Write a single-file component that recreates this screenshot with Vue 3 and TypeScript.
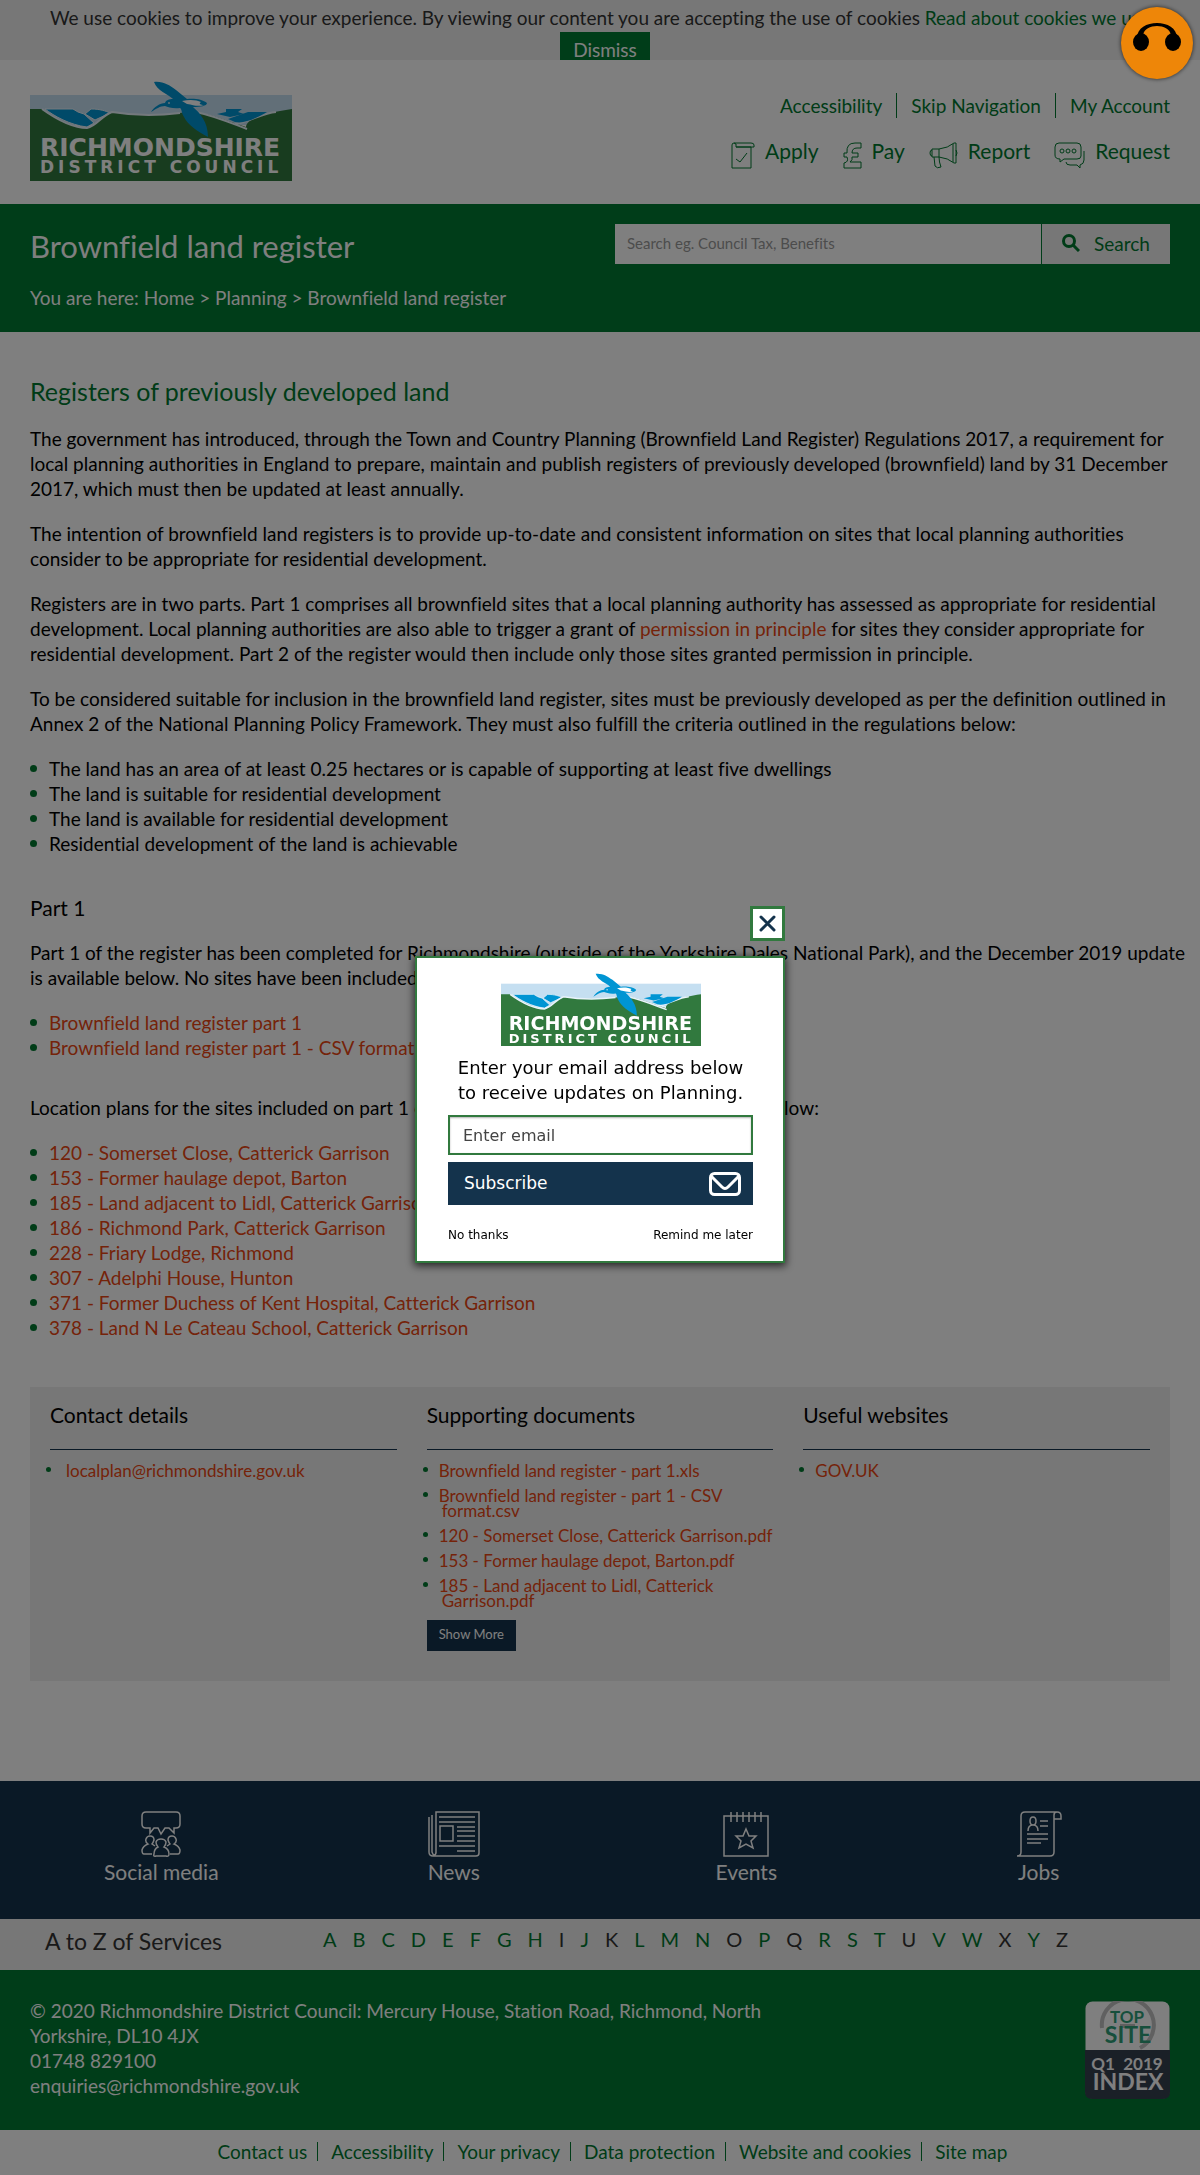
<script setup lang="ts">
import { ref } from 'vue'

interface Letter {
  name: string
  active: boolean
}

const cookiesUrl = '#cookies'
const email = ref('')
const query = ref('')

const criteria: string[] = [
  'The land has an area of at least 0.25 hectares or is capable of supporting at least five dwellings',
  'The land is suitable for residential development',
  'The land is available for residential development',
  'Residential development of the land is achievable',
]

const registers: string[] = ['Brownfield land register part 1', 'Brownfield land register part 1 - CSV format']

const plans: string[] = [
  '120 - Somerset Close, Catterick Garrison',
  '153 - Former haulage depot, Barton',
  '185 - Land adjacent to Lidl, Catterick Garrison',
  '186 - Richmond Park, Catterick Garrison',
  '228 - Friary Lodge, Richmond',
  '307 - Adelphi House, Hunton',
  '371 - Former Duchess of Kent Hospital, Catterick Garrison',
  '378 - Land N Le Cateau School, Catterick Garrison',
]

const documents: string[] = [
  'Brownfield land register - part 1.xls',
  'Brownfield land register - part 1 - CSV format.csv',
  '120 - Somerset Close, Catterick Garrison.pdf',
  '153 - Former haulage depot, Barton.pdf',
  '185 - Land adjacent to Lidl, Catterick Garrison.pdf',
]

const letters: Letter[] = 'ABCDEFGHIJKLMNOPQRSTUVWXYZ'
  .split('')
  .map((name) => ({ name, active: !'IKOQUXZ'.includes(name) }))

const footerLinks: string[] = [
  'Contact us',
  'Accessibility',
  'Your privacy',
  'Data protection',
  'Website and cookies',
  'Site map',
]
</script>

<template>
  <svg class="defs" aria-hidden="true">
    <symbol id="council-logo" viewBox="0 0 262 100" preserveAspectRatio="xMidYMin slice">
      <rect y="14" width="262" height="30" fill="#c5dff1" />
      <path d="M0 28H12C28 38 42 46 57 47C67 45 71 35 82 31C100 34 125 35 150 32C172 28 190 38 216 46C216 38 234 32 262 28V100H0Z" fill="#31793e" />
      <path d="M15 28H43L48 31L54 33L64 42L57 46C40 44 24 35 15 28Z" fill="#0095d3" stroke="#e8f3fa" stroke-width="1" />
      <path d="M55 33L61 28C70 28 76 30 80 32L65 39Z" fill="#0095d3" stroke="#e8f3fa" stroke-width="1" />
      <path d="M12 28C26 38 42 47 57 47C67 45 71 35 82 31C100 34 125 35 150 32M166 31C185 35 201 42 217 48M205 43C220 41 232 32 246 31" fill="none" stroke="#e8f3fa" stroke-width="2" />
      <path d="M187 33L196 31V28H212L208 31L214 33L200 36Z" fill="#0095d3" />
      <path d="M198 38L218 31H237C225 38 214 43 205 41Z" fill="#0095d3" />
      <path d="M124 1C133 0 139 4 146 9L157 18C163 17 173 18 177 22C177 25 170 26 163 26C170 32 178 41 178 56C167 50 158 44 154 36C151 31 152 28 150 27C143 28 138 26 135 25C130 25 126 28 121 31C124 26 130 22 135 22C136 19 139 18 143 18C138 13 127 10 124 1Z" fill="#0095d3" />
      <path d="M152 20C160 18 167 19 171 21C168 23 171 24 174 24C167 26 164 24 157 23Z" fill="#fff" />
      <circle cx="139" cy="22" r="1" fill="#c5dff1" />
      <text x="10" y="75" class="logo-name">RICHMONDSHIRE</text>
      <text x="10" y="92" class="logo-type">DISTRICT COUNCIL</text>
    </symbol>
  </svg>

  <div class="cookie-bar">
    <p>
      We use cookies to improve your experience. By viewing our content you are accepting the use of cookies
      <a :href="cookiesUrl">Read about cookies we use</a>
    </p>
    <button type="button" class="dismiss">Dismiss</button>
  </div>

  <header class="header">
    <a href="#home" class="logo" aria-label="Richmondshire District Council">
      <svg><use href="#council-logo" /></svg>
    </a>
    <div class="header-nav">
      <nav class="top-links">
        <a href="#accessibility">Accessibility</a>
        <a href="#content">Skip Navigation</a>
        <a href="#account">My Account</a>
      </nav>
      <nav class="tasks">
        <a href="#apply">
          <svg width="24" height="27" viewBox="0 0 24 27">
            <path d="M1 26V3Q1 1 3 1H20Q23 1 23 3V5H5Q6 1 3 1M5 5H20V26H1M5 17L9 20L16 11" />
          </svg>
          Apply
        </a>
        <a href="#pay">
          <svg width="19" height="27" viewBox="0 0 19 27">
            <path d="M18 1V6H14Q9 6 9 11H15V15H9Q10 18 7 20H18V26H1V21Q6 20 4 15H1V11H4Q3 1 12 1Z" />
          </svg>
          Pay
        </a>
        <a href="#report">
          <svg width="29" height="27" viewBox="0 0 29 27">
            <path d="M3 7H10Q19 6 25 1H27V21H25Q19 16 10 15H3ZM3 8Q1 8 1 11Q1 14 3 14M10 7V15M24 2V20M27 8Q29 11 27 14M5 15L6 24Q8 27 12 25Q10 20 10 15" />
          </svg>
          Report
        </a>
        <a href="#request">
          <svg width="31" height="27" viewBox="0 0 31 27">
            <path d="M5 1H23Q27 1 27 5V14Q27 17 23 17H10L6 20V17Q1 17 1 13V5Q1 1 5 1ZM30 9V18Q30 22 26 23V26L23 23H16Q12 23 12 20" />
            <circle cx="8" cy="9" r="2" />
            <circle cx="14" cy="9" r="2" />
            <circle cx="20" cy="9" r="2" />
          </svg>
          Request
        </a>
      </nav>
    </div>
  </header>

  <section class="banner">
    <div class="banner-text">
      <h1>Brownfield land register</h1>
      <p class="crumbs">
        You are here: <a href="#home">Home</a> &gt; <a href="#planning">Planning</a> &gt; Brownfield land register
      </p>
    </div>
    <form class="search" @submit.prevent>
      <input v-model="query" type="search" aria-label="Search" placeholder="Search eg. Council Tax, Benefits" />
      <button type="submit">
        <svg width="18" height="18" viewBox="0 0 18 18">
          <circle cx="7" cy="7" r="5.5" />
          <path d="M11 11L17 17" />
        </svg>
        Search
      </button>
    </form>
  </section>

  <main id="content" class="content">
    <h2>Registers of previously developed land</h2>
    <p>
      The government has introduced, through the Town and Country Planning (Brownfield Land Register) Regulations 2017,
      a requirement for local planning authorities in England to prepare, maintain and publish registers of previously
      developed (brownfield) land by 31 December 2017, which must then be updated at least annually.
    </p>
    <p>
      The intention of brownfield land registers is to provide up-to-date and consistent information on sites that local
      planning authorities consider to be appropriate for residential development.
    </p>
    <p>
      Registers are in two parts. Part 1 comprises all brownfield sites that a local planning authority has assessed as
      appropriate for residential development. Local planning authorities are also able to trigger a grant of
      <a href="#permission">permission in principle</a> for sites they consider appropriate for residential
      development. Part 2 of the register would then include only those sites granted permission in principle.
    </p>
    <p>
      To be considered suitable for inclusion in the brownfield land register, sites must be previously developed as per
      the definition outlined in Annex 2 of the National Planning Policy Framework. They must also fulfill the criteria
      outlined in the regulations below:
    </p>
    <ul>
      <li v-for="item in criteria" :key="item">{{ item }}</li>
    </ul>
    <h3>Part 1</h3>
    <p>
      Part 1 of the register has been completed for Richmondshire (outside of the Yorkshire Dales National Park), and
      the December 2019 update is available below. No sites have been included
    </p>
    <ul>
      <li v-for="item in registers" :key="item"><a href="#register">{{ item }}</a></li>
    </ul>
    <p class="plans-intro">
      Location plans for the sites included on part 1 of the register are available to open in full below:
    </p>
    <ul>
      <li v-for="item in plans" :key="item"><a href="#plan">{{ item }}</a></li>
    </ul>

    <section class="panel">
      <div>
        <h3>Contact details</h3>
        <ul class="contact">
          <li><a href="mailto:localplan@richmondshire.gov.uk">localplan@richmondshire.gov.uk</a></li>
        </ul>
      </div>
      <div>
        <h3>Supporting documents</h3>
        <ul>
          <li v-for="item in documents" :key="item"><a href="#document">{{ item }}</a></li>
        </ul>
        <button type="button" class="more">Show More</button>
      </div>
      <div>
        <h3>Useful websites</h3>
        <ul>
          <li><a href="#govuk">GOV.UK</a></li>
        </ul>
      </div>
    </section>
  </main>

  <nav class="channels">
    <a href="#social">
      <svg width="46" height="46" viewBox="0 0 46 46">
        <path d="M8 1H38Q42 1 42 5V13Q42 17 38 17H36V22L31 17H27L23 23L20 17H16L12 22V17H8Q4 17 4 13V5Q4 1 8 1Z" />
        <path d="M14 43H6Q4 43 4 39Q5 35 10 33Q7 31 8 28Q9 25 12 25Q16 25 16 29Q15 32 14 33L17 35M32 43H40Q42 43 42 39Q41 35 36 33Q39 31 38 28Q37 25 34 25Q30 25 30 29Q31 32 32 33L29 35M20 36Q18 34 18 31Q19 28 23 28Q27 28 28 31Q28 34 26 36Q31 38 31 43Q31 46 28 45H18Q15 46 16 43Q16 38 20 36Z" />
      </svg>
      Social media
    </a>
    <a href="#news">
      <svg width="52" height="46" viewBox="0 0 52 46">
        <path d="M8 42V1H51V42Q51 45 48 45H5Q1 45 1 41V6M4 4V41Q5 44 6 44Q8 44 8 41M11 6H47M11 11H47M29 16H47M29 20H47M29 25H47M29 30H47M11 35H47M29 40H47M12 15H25V30H12Z" />
      </svg>
      News
    </a>
    <a href="#events">
      <svg width="46" height="46" viewBox="0 0 46 46">
        <path d="M1 5H45V45H1ZM8 1V11M14 1V11M20 1V11M26 1V11M32 1V11M38 1V11M23 18L26 25H33L28 30L30 37L23 33L16 37L18 30L13 25H20Z" />
      </svg>
      Events
    </a>
    <a href="#jobs">
      <svg width="46" height="46" viewBox="0 0 46 46">
        <path d="M1 45Q5 45 5 41V5Q5 1 9 1H41Q45 1 45 5V8H38V41Q38 45 34 45H1M38 8V4Q38 1 41 1M24 10H32M24 15H32M11 23H32M11 28H32M11 32H25" />
        <path d="M17 6Q20 6 20 10Q20 14 17 14Q14 14 14 10Q14 6 17 6ZM12 20Q12 14 17 14Q22 14 22 20" />
      </svg>
      Jobs
    </a>
  </nav>

  <section class="az">
    <h2>A to Z of Services</h2>
    <ul>
      <li v-for="letter in letters" :key="letter.name">
        <a v-if="letter.active" :href="'#' + letter.name">{{ letter.name }}</a>
        <span v-else>{{ letter.name }}</span>
      </li>
    </ul>
  </section>

  <footer>
    <div class="address">
      <p>
        © 2020 Richmondshire District Council: Mercury House, Station Road, Richmond, North Yorkshire, DL10 4JX<br />
        01748 829100<br />
        enquiries@richmondshire.gov.uk
      </p>
      <svg class="badge" width="85" height="98" viewBox="0 0 85 98" role="img" aria-label="Top site, Q1 2019 index">
        <rect x="0.5" y="0.5" width="84" height="97" rx="7" fill="#fff" />
        <path d="M0 49H85V91Q85 98 78 98H7Q0 98 0 91Z" fill="#35404f" />
        <path d="M17 27A26 26 0 1 1 55 47M35 25H50" fill="none" stroke="#c0c0c0" stroke-width="4" />
        <text x="42" y="22" class="badge-top">TOP</text>
        <text x="43" y="42" class="badge-site">SITE</text>
        <text x="42" y="69" class="badge-date">Q1&nbsp; 2019</text>
        <text x="43" y="89" class="badge-index">INDEX</text>
      </svg>
    </div>
    <nav class="footer-links">
      <a v-for="link in footerLinks" :key="link" href="#footer">{{ link }}</a>
    </nav>
  </footer>

  <div class="overlay">
    <div class="dialog" role="dialog" aria-label="Subscribe to updates">
      <button type="button" class="close" aria-label="Close">
        <svg width="17" height="17" viewBox="0 0 17 17"><path d="M2 2L15 15M15 2L2 15" /></svg>
      </button>
      <form class="popup" @submit.prevent>
        <svg class="popup-logo"><use href="#council-logo" /></svg>
        <label for="email">Enter your email address below<br />to receive updates on Planning.</label>
        <input id="email" v-model="email" type="email" placeholder="Enter email" />
        <button type="submit" class="subscribe">
          Subscribe
          <svg width="32" height="24" viewBox="0 0 32 24">
            <rect x="1.5" y="1.5" width="29" height="21" rx="4" />
            <path d="M2 4L13 15Q16 18 19 15L30 4" />
          </svg>
        </button>
        <div class="popup-actions">
          <button type="button">No thanks</button>
          <button type="button">Remind me later</button>
        </div>
      </form>
    </div>
  </div>

  <button type="button" class="listen" aria-label="Listen to this page">
    <svg width="48" height="30" viewBox="0 0 48 30">
      <path d="M4 16C4 -4 44 -4 44 16L38 13C36 1 12 1 10 13Z" />
      <ellipse cx="8" cy="20" rx="8" ry="9" />
      <ellipse cx="40" cy="20" rx="8" ry="9" />
    </svg>
  </button>
</template>

<style>
body {
  margin: 0;
  background: #fff;
}

#app {
  font: 19px/25px Lato, "Open Sans", sans-serif;
  font-variant-ligatures: none;
  color: #000;
}
</style>

<style scoped>
* {
  box-sizing: border-box;
}

h1,
h2,
h3,
p,
ul {
  margin: 0;
  padding: 0;
  font-weight: inherit;
}

ul {
  list-style: none;
}

a {
  color: #00782f;
  text-decoration: none;
}

button,
input {
  font: inherit;
  border: 0;
  border-radius: 0;
  margin: 0;
}

.defs {
  position: absolute;
  width: 0;
  height: 0;
}

.logo-name,
.logo-type {
  fill: #fff;
  font-family: "DejaVu Sans", sans-serif;
  font-weight: 700;
}

.logo-name {
  font-size: 25px;
}

.logo-type {
  font-size: 17px;
  letter-spacing: 4px;
}

.cookie-bar {
  height: 60px;
  overflow: hidden;
  padding: 5px 30px 0;
  background: #eee;
  color: #333;
  text-align: center;
}

.dismiss {
  margin: 2px 0 0 10px;
  padding: 5px 13px 10px;
  height: 40px;
  background: #007a32;
  color: #fff;
}

.header {
  display: flex;
  justify-content: space-between;
  align-items: flex-start;
  height: 144px;
  padding: 21px 30px 0;
}

.logo svg {
  display: block;
  width: 262px;
  height: 100px;
}

.header-nav {
  display: flex;
  flex-direction: column;
  align-items: flex-end;
  padding-top: 12px;
}

.top-links {
  display: flex;
}

.top-links a + a {
  margin-left: 14px;
  padding-left: 14px;
  border-left: 1px solid #00782f;
}

.tasks {
  display: flex;
  gap: 24px;
  margin-top: 20px;
  font-size: 21px;
}

.tasks a {
  display: flex;
  gap: 10px;
}

.tasks svg {
  margin-top: 4px;
  fill: none;
  stroke: #00782f;
}

.banner {
  display: flex;
  justify-content: space-between;
  height: 128px;
  padding: 20px 30px 0;
  background: #007a32;
  color: #fff;
}

.banner a {
  color: #fff;
}

h1 {
  font-size: 31px;
  line-height: 45px;
}

.crumbs {
  margin-top: 16px;
}

.search {
  display: flex;
  width: 555px;
  height: 40px;
}

.search input {
  flex: 1;
  min-width: 0;
  padding: 0 12px 2px;
  background: #fff;
  font-size: 15px;
}

.search input::placeholder {
  color: #999;
}

.search button {
  display: flex;
  align-items: center;
  justify-content: center;
  gap: 14px;
  width: 128px;
  margin-left: 1px;
  padding: 0 6px 2px;
  background: #eee;
  color: #00782f;
}

.search button svg {
  fill: none;
  stroke: #00782f;
  stroke-width: 3;
}

.content {
  padding: 42px 30px 100px;
}

.content > h2 {
  margin-bottom: 17px;
  font-size: 25px;
  line-height: 35px;
  color: #00782f;
}

.content > p,
.content > ul {
  margin-bottom: 20px;
}

/* Running text may reach a little into the page gutter. */
.content > p {
  margin-right: -20px;
}

.content > h3 {
  margin: 39px 0 20px;
  font-size: 21px;
}

.content > .plans-intro {
  margin-top: 35px;
}

.content a {
  color: #ea4612;
}

li::before {
  content: "";
  display: inline-block;
  border-radius: 50%;
  background: #00782f;
}

.content > ul li {
  display: flex;
  align-items: center;
  gap: 12px;
}

.content > ul li::before {
  width: 7px;
  height: 7px;
}

.panel {
  display: grid;
  grid-template-columns: repeat(3, 1fr);
  gap: 30px;
  margin-top: 47px;
  padding: 15px 20px 0;
  background: #eee;
}

.panel h3 {
  margin-bottom: 13px;
  padding-bottom: 22px;
  border-bottom: 1px solid #14334c;
  font-size: 21px;
}

.panel li {
  position: relative;
  margin-bottom: 10px;
  padding-left: 15px;
  font-size: 17px;
  line-height: 15px;
  text-indent: -3px;
}

.panel li::before {
  position: absolute;
  top: 4px;
  left: -4px;
  width: 5px;
  height: 5px;
}

.panel .contact li {
  padding-left: 19px;
}

.more {
  display: block;
  height: 31px;
  margin: 12px 0 30px;
  padding: 0 12px 3px;
  background: #14334c;
  color: #fff;
  font-size: 13px;
}

.channels {
  display: flex;
  height: 138px;
  padding: 30px 15px 0;
  background: #14334c;
  font-size: 21px;
}

.channels a {
  flex: 1;
  display: flex;
  flex-direction: column;
  align-items: center;
  gap: 2px;
  color: #fff;
}

.channels svg {
  fill: none;
  stroke: #fff;
  stroke-width: 1.5;
}

.az {
  display: flex;
  height: 51px;
  padding: 8px 45px 0;
  background: #eee;
  color: #333;
}

.az h2 {
  width: 278px;
  padding-top: 2px;
  font-size: 23px;
}

.az ul {
  display: flex;
  gap: 16px;
  font-size: 20px;
}

.az li::before {
  display: none;
}

.address {
  display: flex;
  justify-content: space-between;
  height: 160px;
  padding: 28px 30px 0;
  background: #007a32;
  color: #fff;
}

.address p {
  width: 740px;
}

.badge {
  margin-top: 3px;
}

.badge text {
  font-weight: 700;
  text-anchor: middle;
}

.badge-top {
  fill: #2f9f78;
  font-size: 17px;
}

.badge-site {
  fill: #2f9f78;
  font-size: 23px;
}

.badge-date {
  fill: #fff;
  font-size: 17px;
}

.badge-index {
  fill: #fff;
  font-size: 23px;
}

.footer-links {
  display: flex;
  justify-content: center;
  height: 45px;
  padding: 12px 0 14px 22px;
}

.footer-links a {
  padding: 0 10px 0 13px;
  line-height: 19px;
}

.footer-links a + a {
  border-left: 1px solid #00782f;
}

.overlay {
  position: fixed;
  inset: 0;
  display: flex;
  align-items: center;
  justify-content: center;
  padding-bottom: 6px;
  background: rgba(0, 0, 0, 0.5);
  font-family: "DejaVu Sans", sans-serif;
  font-size: 18px;
}

.dialog {
  display: flex;
  flex-direction: column;
  align-items: flex-end;
  gap: 15px;
  width: 370px;
}

.close {
  display: flex;
  align-items: center;
  justify-content: center;
  width: 35px;
  height: 35px;
  padding: 0;
  border: 3px solid #31793e;
  background: #fff;
}

.close svg {
  fill: none;
  stroke: #14334c;
  stroke-width: 3;
  stroke-linecap: round;
}

.popup {
  display: flex;
  flex-direction: column;
  align-items: center;
  width: 100%;
  height: 307px;
  padding: 15px 30px 0 31px;
  border: 2px solid #31793e;
  background: #fff;
  box-shadow: 0 2px 8px 1px rgba(0, 0, 0, 0.7);
}

.popup-logo {
  width: 200px;
  height: 73px;
}

.popup label {
  margin: 9px 0 10px;
  text-align: center;
}

.popup input {
  width: 100%;
  height: 40px;
  padding: 0 13px;
  border: 2px solid #31793e;
  box-shadow: inset 0 1px 2px rgba(0, 0, 0, 0.3);
  font-size: 16px;
}

.popup input::placeholder {
  color: #444;
}

.subscribe {
  display: flex;
  align-items: center;
  justify-content: space-between;
  width: 100%;
  height: 43px;
  margin-top: 7px;
  padding: 0 12px 0 16px;
  background: #14334c;
  color: #fff;
  font-size: 17px;
}

.subscribe svg {
  fill: none;
  stroke: #fff;
  stroke-width: 3;
}

.popup-actions {
  display: flex;
  justify-content: space-between;
  width: 100%;
  margin-top: 18px;
}

.popup-actions button {
  padding: 0;
  background: none;
  font-size: 12px;
}

.listen {
  position: fixed;
  top: 7px;
  right: 7px;
  width: 72px;
  height: 72px;
  padding: 0 0 12px;
  border-radius: 50%;
  background: #ee8608;
  box-shadow: 0 0 4px rgba(0, 0, 0, 0.7);
}

.listen svg {
  display: block;
  margin: 0 auto;
}
</style>
